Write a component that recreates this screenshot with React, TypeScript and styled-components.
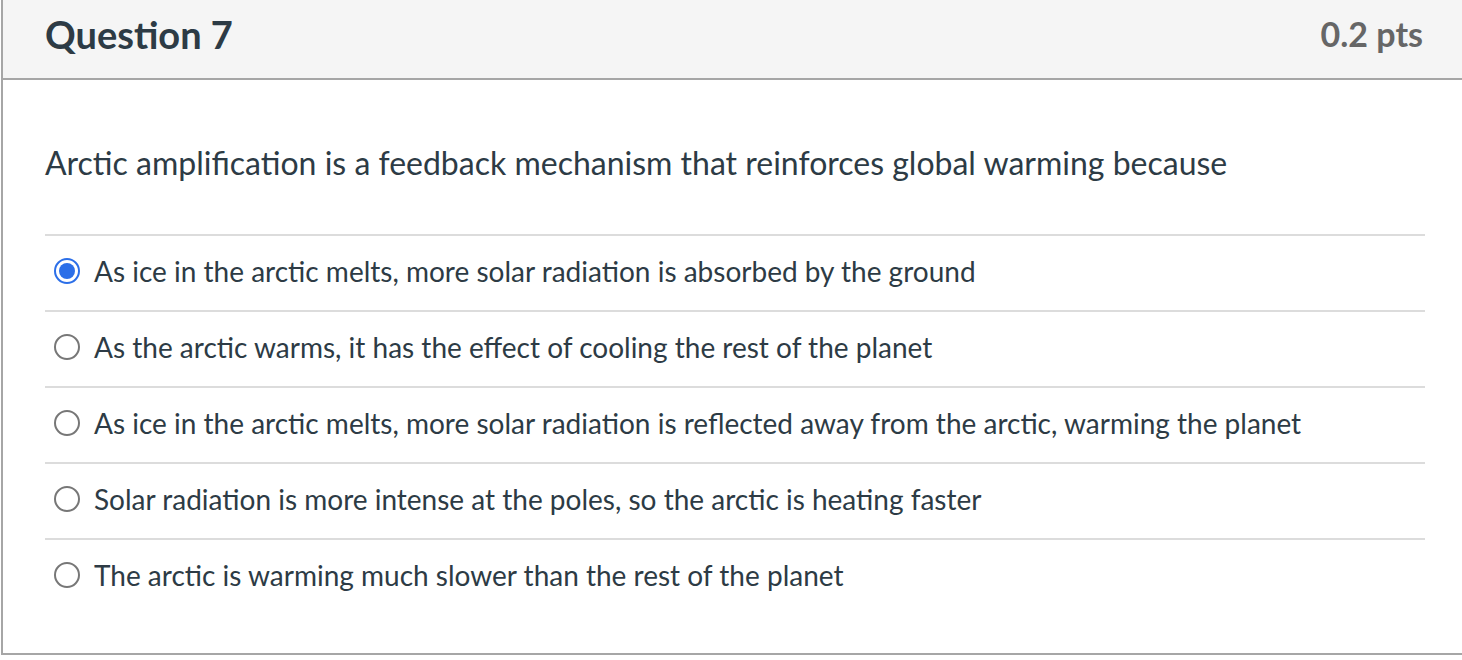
import React from 'react';
import styled, { createGlobalStyle } from 'styled-components';

const GlobalStyle = createGlobalStyle`
  html, body {
    margin: 0;
    padding: 0;
    background: #ffffff;
    overflow: hidden;
  }
  body {
    font-family: Lato, "Noto Sans", "Liberation Sans", sans-serif;
    color: #2d3b45;
  }
`;

const QuestionCard = styled.div`
  margin-left: 1px;
  width: 1480px;
  border-left: 2px solid #a6a6a6;
  border-right: 2px solid #a6a6a6;
  border-bottom: 2px solid #a6a6a6;
  box-sizing: border-box;
  background: #ffffff;
`;

const Header = styled.div`
  height: 80px;
  display: flex;
  align-items: center;
  justify-content: space-between;
  padding: 0 42px 11px 42px;
  width: 1462px;
  box-sizing: border-box;
  background: #f5f5f5;
  border-bottom: 2px solid #a6a6a6;
`;

const Title = styled.h2`
  margin: 0;
  font-size: 38px;
  font-weight: 700;
  color: #2d3b45;
`;

const Points = styled.span`
  font-size: 34px;
  font-weight: 700;
  color: #666666;
`;

const Body = styled.div`
  width: 1462px;
  box-sizing: border-box;
  padding: 0 40px 39px 42px;
`;

const QuestionText = styled.p`
  margin: 0;
  height: 154px;
  padding-top: 10px;
  box-sizing: border-box;
  display: flex;
  align-items: center;
  font-size: 32px;
  color: #2d3b45;
`;

const AnswerList = styled.div`
  display: flex;
  flex-direction: column;
`;

const AnswerRow = styled.label`
  height: 76px;
  display: flex;
  align-items: center;
  gap: 14px;
  padding: 0 0 5px 9px;
  border-top: 2px solid #dcdcdc;
  box-sizing: border-box;
  font-size: 28px;
  color: #2d3b45;
`;

const Radio = styled.span<{ $checked?: boolean }>`
  width: 26px;
  height: 26px;
  border-radius: 50%;
  box-sizing: border-box;
  flex-shrink: 0;
  position: relative;
  border: 2px solid ${p => (p.$checked ? '#2c6fe8' : '#777777')};
  background: #ffffff;

  &::after {
    content: '';
    display: ${p => (p.$checked ? 'block' : 'none')};
    position: absolute;
    inset: 3px;
    border-radius: 50%;
    background: #2c6fe8;
  }
`;

const answers = [
  'As ice in the arctic melts, more solar radiation is absorbed by the ground',
  'As the arctic warms, it has the effect of cooling the rest of the planet',
  'As ice in the arctic melts, more solar radiation is reflected away from the arctic, warming the planet',
  'Solar radiation is more intense at the poles, so the arctic is heating faster',
  'The arctic is warming much slower than the rest of the planet',
];

export default function App() {
  return (
    <>
      <GlobalStyle />
      <QuestionCard>
        <Header>
          <Title>Question 7</Title>
          <Points>0.2 pts</Points>
        </Header>
        <Body>
          <QuestionText>
            Arctic amplification is a feedback mechanism that reinforces global warming because
          </QuestionText>
          <AnswerList>
            {answers.map((a, i) => (
              <AnswerRow key={i}>
                <Radio $checked={i === 0} />
                <span>{a}</span>
              </AnswerRow>
            ))}
          </AnswerList>
        </Body>
      </QuestionCard>
    </>
  );
}
